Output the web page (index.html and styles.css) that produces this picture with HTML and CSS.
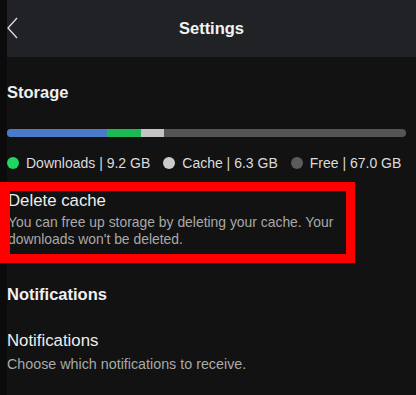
FILE: index.html
```html
<!DOCTYPE html>
<html>
<head>
<meta charset="utf-8">
<link rel="stylesheet" href="styles.css">
</head>
<body>
<div class="screen">
  <header class="topbar">
    <svg class="back" width="12" height="22" viewBox="0 0 12 22"><path d="M10 1 L1 11 L10 21" fill="none" stroke="#d8d8d8" stroke-width="1.4"/></svg>
    <h1 class="title">Settings</h1>
  </header>
  <main class="content">
    <h2 class="section">Storage</h2>
    <div class="bar">
      <span class="seg seg-blue" style="width:100px"></span>
      <span class="seg seg-green" style="width:34px"></span>
      <span class="seg seg-light" style="width:23px"></span>
    </div>
    <div class="legend">
      <span class="item"><span class="dot dot-green"></span>Downloads | 9.2 GB</span>
      <span class="item"><span class="dot dot-light"></span>Cache | 6.3 GB</span>
      <span class="item"><span class="dot dot-dark"></span>Free | 67.0 GB</span>
    </div>
    <div class="row row-cache">
      <div class="row-title">Delete cache</div>
      <div class="row-desc">You can free up storage by deleting your cache. Your downloads won't be deleted.</div>
      <div class="highlight"></div>
    </div>
    <h2 class="section section-notif">Notifications</h2>
    <div class="row row-notif">
      <div class="row-title">Notifications</div>
      <div class="row-desc">Choose which notifications to receive.</div>
    </div>
  </main>
</div>
</body>
</html>
```
FILE: styles.css
```css
html, body {
  margin: 0;
  padding: 0;
  background: #0b0b0b;
  font-family: "Liberation Sans", Arial, sans-serif;
  overflow: hidden;
}
.screen {
  margin-left: 7px;
  width: 409px;
  height: 395px;
  background: #121212;
}
.topbar {
  height: 57px;
  background: #212226;
  display: flex;
  align-items: center;
  justify-content: center;
  position: relative;
}
.back {
  position: absolute;
  left: 0;
  top: 17px;
}
.title {
  margin: 0;
  font-size: 16.5px;
  font-weight: bold;
  color: #f2f2f2;
}
.content {
  padding: 0 10px 0 0;
}
.section {
  margin: 0;
  font-size: 16.5px;
  font-weight: bold;
  color: #f0f0f0;
  line-height: 20px;
}
.content > .section:first-child {
  padding-top: 25px;
}
.bar {
  margin-top: 27px;
  height: 8px;
  border-radius: 4px;
  background: #555555;
  display: flex;
  overflow: hidden;
}
.seg { display: block; height: 100%; }
.seg-blue { background: #4a7bc9; }
.seg-green { background: #1db954; }
.seg-light { background: #c4c4c4; }
.legend {
  margin-top: 19px;
  display: flex;
  align-items: center;
  gap: 13px;
  font-size: 14px;
  color: #dcdcdc;
  line-height: 14px;
}
.item {
  display: flex;
  align-items: center;
  gap: 7px;
}
.dot {
  width: 12px;
  height: 12px;
  border-radius: 50%;
  display: inline-block;
}
.dot-green { background: #1ed760; }
.dot-light { background: #cbcbcb; }
.dot-dark { background: #5b5b5b; }
.row {
  position: relative;
}
.row-cache {
  margin-top: 21px;
}
.row-cache .row-desc {
  width: 345px;
  font-size: 13.9px;
}
.row-title {
  font-size: 16.8px;
  color: #ededed;
  line-height: 20px;
  padding-left: 1px;
}
.row-desc {
  font-size: 13.5px;
  color: #a9a9a9;
  line-height: 17px;
  margin-top: 3px;
  padding-left: 1px;
}
.highlight {
  position: absolute;
  left: -7px;
  top: -9px;
  width: 336px;
  height: 63px;
  border: 9px solid #ff0000;
  border-left-width: 10px;
}
.section-notif {
  margin-top: 36px;
}
.row-notif {
  margin-top: 27px;
}
.row-notif .row-desc {
  font-size: 14.3px;
  margin-top: 5px;
  padding-left: 0;
}
.row-notif .row-title {
  padding-left: 0;
}
```
